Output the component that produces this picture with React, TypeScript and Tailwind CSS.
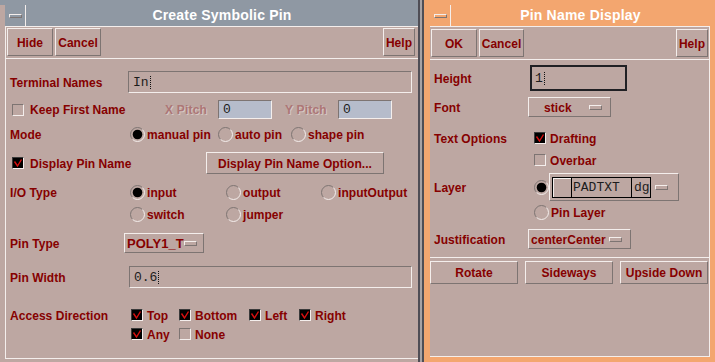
import React from 'react';

const raised = 'border border-t-[#f4eeec] border-l-[#f4eeec] border-b-[#7d7472] border-r-[#7d7472]';
const sunken = 'border border-t-[#7d7472] border-l-[#7d7472] border-b-[#f4eeec] border-r-[#f4eeec]';
const label =
  "font-['Liberation_Sans',sans-serif] text-[12px] font-bold leading-none tracking-[0.05px] text-[#860000] whitespace-nowrap pt-[1px]";
const mono = "font-['Liberation_Mono',monospace] text-[13px] leading-none text-[#1c1c1c] whitespace-nowrap";
const dim =
  "font-['Liberation_Sans',sans-serif] text-[12px] font-bold leading-none tracking-[0.2px] text-[#ad7676] [text-shadow:1px_1px_0_#d6c8c4] whitespace-nowrap pt-[1px]";

const Radio = ({ on = false }: { on?: boolean }) => (
  <svg width="15" height="15" viewBox="0 0 15 15" className="shrink-0">
    <path d="M2.55 12.45 A7 7 0 0 1 12.45 2.55" stroke="#7d7472" strokeWidth="1" fill="none" />
    <path d="M12.45 2.55 A7 7 0 0 1 2.55 12.45" stroke="#f4eeec" strokeWidth="1" fill="none" />
    {on && <circle cx="7.5" cy="7.5" r="4.8" fill="#000" />}
  </svg>
);

const Check = ({ on = false }: { on?: boolean }) =>
  on ? (
    <span className="flex h-[12px] w-[12px] shrink-0 items-center justify-center border border-t-[#3a3a3a] border-l-[#3a3a3a] border-b-[#f4eeec] border-r-[#f4eeec] bg-black">
      <svg width="10" height="10" viewBox="0 0 10 10">
        <path d="M1.5 3.5 L4.5 8 L8.5 1.5" stroke="#d81010" strokeWidth="1.4" fill="none" />
      </svg>
    </span>
  ) : (
    <span className={`block h-[12px] w-[12px] shrink-0 ${sunken}`} />
  );

const Indicator = () => <span className={`block h-[5px] w-[13px] shrink-0 ${raised}`} />;

const Cursor = () => <span className="ml-[1px] block h-[13px] w-[1px] border-l border-dotted border-[#111]" />;

const Btn = ({ text, w, h = 'h-[28px]' }: { text: string; w: string; h?: string }) => (
  <div className={`flex ${w} ${h} items-center justify-center ${raised}`}>
    <span className={label}>{text}</span>
  </div>
);

const RadioItem = ({ text, w, on = false }: { text: string; w: string; on?: boolean }) => (
  <div className={`flex ${w} items-center gap-[2px]`}>
    <Radio on={on} />
    <span className={label}>{text}</span>
  </div>
);

const CheckItem = ({ text, w, on = false }: { text: string; w: string; on?: boolean }) => (
  <div className={`flex ${w} items-center gap-[4px]`}>
    <Check on={on} />
    <span className={label}>{text}</span>
  </div>
);

const MenuBox = ({ bg }: { bg: string }) => (
  <div className={`flex w-[21px] items-center justify-center border-r border-b border-[#f4eeec] ${bg}`}>
    <span className={`block h-[4px] w-[13px] ${raised}`} />
  </div>
);

function SymbolicPin() {
  return (
    <div className="flex h-[362px] w-[418px] flex-col bg-[#bda7a2] pb-[3px]">
      <div className="h-[5px] bg-[#8f98a3]" />
      <div className="flex flex-1 flex-col pl-[5px]">
        <div className="flex h-[22px]">
          <MenuBox bg="bg-[#8f98a3]" />
          <div className="flex flex-1 items-center justify-center border-b border-[#f4eeec] bg-[#8f98a3] pb-[1px]">
            <span className="font-['Liberation_Sans',sans-serif] text-[14px] font-bold leading-none tracking-[0.2px] text-white">
              Create Symbolic Pin
            </span>
          </div>
        </div>
        <div className="flex flex-1 flex-col border-l border-b border-[#f4eeec]">
          <div className="flex h-[32px] items-start gap-[2px] border-b border-[#f4eeec] pl-[1px] pr-[3px] pt-[1px]">
            <Btn text="Hide" w="w-[46px]" />
            <Btn text="Cancel" w="w-[46px]" />
            <div className="ml-auto">
              <Btn text="Help" w="w-[32px]" />
            </div>
          </div>

          <div className="flex flex-col pl-[4px]">
            <div className="mt-[12px] flex h-[22px] items-center">
              <span className={`w-[118px] ${label}`}>Terminal Names</span>
              <div className={`flex h-[22px] w-[284px] items-center pl-[4px] ${sunken}`}>
                <span className={mono}>In</span>
                <Cursor />
              </div>
            </div>

            <div className="flex h-[33px] items-center">
              <div className="flex w-[155px] items-center gap-[6px] pl-[2px]">
                <Check />
                <span className={label}>Keep First Name</span>
              </div>
              <span className={`w-[53px] ${dim}`}>X Pitch</span>
              <div className={`flex h-[19px] w-[54px] items-center bg-[#b6bccb] pl-[4px] ${sunken}`}>
                <span className={mono}>0</span>
              </div>
              <span className={`w-[66px] pl-[13px] ${dim}`}>Y Pitch</span>
              <div className={`flex h-[19px] w-[54px] items-center bg-[#b6bccb] pl-[4px] ${sunken}`}>
                <span className={mono}>0</span>
              </div>
            </div>

            <div className="flex h-[16px] items-center">
              <span className={`w-[120px] ${label}`}>Mode</span>
              <RadioItem text="manual pin" w="w-[88px]" on />
              <RadioItem text="auto pin" w="w-[73px]" />
              <RadioItem text="shape pin" w="w-[90px]" />
            </div>

            <div className="flex h-[42px] items-center">
              <div className="flex w-[196px] items-center gap-[6px] pl-[2px]">
                <Check on />
                <span className={label}>Display Pin Name</span>
              </div>
              <Btn text="Display Pin Name Option..." w="w-[178px]" h="h-[22px]" />
            </div>

            <div className="flex h-[16px] items-center">
              <span className={`w-[120px] ${label}`}>I/O Type</span>
              <RadioItem text="input" w="w-[96px]" on />
              <RadioItem text="output" w="w-[95px]" />
              <RadioItem text="inputOutput" w="w-[90px]" />
            </div>

            <div className="flex h-[28px] items-center">
              <span className="w-[120px]" />
              <RadioItem text="switch" w="w-[96px]" />
              <RadioItem text="jumper" w="w-[95px]" />
            </div>

            <div className="flex h-[30px] items-center">
              <span className={`w-[114px] ${label}`}>Pin Type</span>
              <div className={`flex h-[20px] w-[80px] items-center justify-between pl-[2px] pr-[7px] ${raised}`}>
                <span className={`${label} text-[13px] tracking-[0px]`}>POLY1_T</span>
                <Indicator />
              </div>
            </div>

            <div className="flex h-[38px] items-center">
              <span className={`w-[119px] ${label}`}>Pin Width</span>
              <div className={`flex h-[22px] w-[283px] items-center pl-[4px] ${sunken}`}>
                <span className={mono}>0.6</span>
                <Cursor />
              </div>
            </div>

            <div className="mt-[9px] flex h-[20px] items-center">
              <span className={`w-[121px] ${label}`}>Access Direction</span>
              <CheckItem text="Top" w="w-[48px]" on />
              <CheckItem text="Bottom" w="w-[70px]" on />
              <CheckItem text="Left" w="w-[50px]" on />
              <CheckItem text="Right" w="w-[60px]" on />
            </div>

            <div className="flex h-[18px] items-center">
              <span className="w-[121px]" />
              <CheckItem text="Any" w="w-[48px]" on />
              <CheckItem text="None" w="w-[70px]" />
            </div>
          </div>
        </div>
      </div>
    </div>
  );
}

function PinNameDisplay() {
  return (
    <div className="flex h-[362px] w-[291px] flex-col bg-[#f3a66f] pl-[6px] pr-[5px] pt-[5px] pb-[5px]">
      <div className="flex h-[22px]">
        <MenuBox bg="bg-[#f3a66f]" />
        <div className="flex flex-1 items-center justify-center border-b border-[#f4eeec] bg-[#f3a66f] pb-[1px]">
          <span className="font-['Liberation_Sans',sans-serif] text-[14px] font-bold leading-none tracking-[0.2px] text-white">
            Pin Name Display
          </span>
        </div>
      </div>
      <div className="flex flex-1 flex-col border-r border-b border-[#f4eeec] bg-[#bda7a2]">
        <div className="flex h-[33px] items-start gap-[2px] border-b border-[#f4eeec] pl-[1px] pr-[1px] pt-[2px]">
          <Btn text="OK" w="w-[46px]" />
          <Btn text="Cancel" w="w-[45px]" />
          <div className="ml-auto">
            <Btn text="Help" w="w-[32px]" />
          </div>
        </div>

        <div className="flex flex-col pl-[4px]">
          <div className="mt-[5px] flex h-[26px] items-center">
            <span className={`w-[96px] ${label}`}>Height</span>
            <div className="flex h-[26px] w-[97px] items-center border-2 border-[#202024] pl-[3px]">
              <span className={mono}>1</span>
              <Cursor />
            </div>
          </div>

          <div className="mt-[6px] flex h-[20px] items-center">
            <span className={`w-[94px] ${label}`}>Font</span>
            <div className={`flex h-[20px] w-[83px] items-center pl-[15px] pr-[8px] ${raised}`}>
              <span className={label}>stick</span>
              <span className="ml-auto">
                <Indicator />
              </span>
            </div>
          </div>

          <div className="mt-[10px] flex h-[22px] items-center">
            <span className={`w-[100px] ${label}`}>Text Options</span>
            <CheckItem text="Drafting" w="w-[90px]" on />
          </div>
          <div className="flex h-[22px] items-center">
            <span className="w-[100px]" />
            <CheckItem text="Overbar" w="w-[90px]" />
          </div>

          <div className="mt-[2px] flex h-[28px] items-center">
            <span className={`w-[100px] ${label}`}>Layer</span>
            <Radio on />
            <div className={`flex h-[28px] w-[130px] items-center pl-[2px] ${raised}`}>
              <div className="flex h-[21px] items-stretch border border-black">
                <span className="w-[19px] border-r border-black shadow-[inset_1px_1px_0_#f4eeec]" />
                <span className={`flex w-[60px] items-center border-r border-black pl-[1px] ${mono} text-[12px]`}>
                  PADTXT
                </span>
                <span className={`flex w-[18px] items-center pl-[2px] ${mono} text-[12px]`}>dg</span>
              </div>
              <span className="ml-[4px]">
                <Indicator />
              </span>
            </div>
          </div>

          <div className="flex h-[22px] items-center">
            <span className="w-[100px]" />
            <RadioItem text="Pin Layer" w="w-[90px]" />
          </div>

          <div className="mt-[6px] flex h-[20px] items-center">
            <span className={`w-[94px] ${label}`}>Justification</span>
            <div className={`flex h-[20px] w-[103px] items-center pl-[2px] pr-[8px] ${raised}`}>
              <span className={label}>centerCenter</span>
              <span className="ml-auto">
                <Indicator />
              </span>
            </div>
          </div>
        </div>

        <div className="mt-[8px] h-[1px] bg-[#f4eeec]" />

        <div className="mt-[3px] flex gap-[7px]">
          <Btn text="Rotate" w="w-[88px]" h="h-[23px]" />
          <Btn text="Sideways" w="w-[88px]" h="h-[23px]" />
          <Btn text="Upside Down" w="w-[88px]" h="h-[23px]" />
        </div>
      </div>
    </div>
  );
}

export default function App() {
  return (
    <div className="flex h-[362px] w-[715px] overflow-hidden bg-[#bda7a2]">
      <SymbolicPin />
      <div className="w-[6px] border-x-2 border-[#4f4d55] bg-[#a8a2a4]" />
      <PinNameDisplay />
    </div>
  );
}
